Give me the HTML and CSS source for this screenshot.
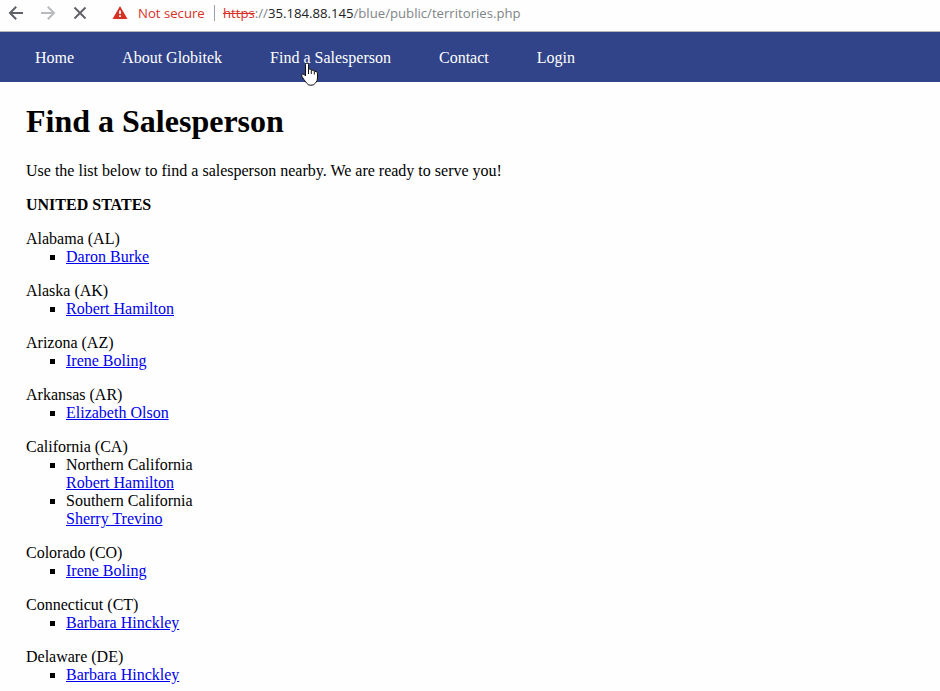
FILE: index.html
```html
<!DOCTYPE html>
<html lang="en">
<head>
<meta charset="utf-8">
<title>Find a Salesperson</title>
<link rel="stylesheet" href="styles.css">
</head>
<body>
<div class="toolbar">
  <svg class="tools" width="132" height="31" viewBox="0 0 132 31" fill="none">
    <path d="M23 13H10.500M16.200 6.800L10 13L16.200 19.200" stroke="#5f6068" stroke-width="2"/>
    <path d="M41 13H53.500M47.800 6.800L54 13L47.800 19.200" stroke="#b9babd" stroke-width="2"/>
    <path d="M74.500 7.500L85.500 18.500M85.500 7.500L74.500 18.500" stroke="#5f6068" stroke-width="1.900"/>
    <path d="M120 6L127.500 19H112.500Z" fill="#d93025"/>
    <path d="M120 10.500V14M120 15.200V17" stroke="#fff" stroke-width="1.800"/>
  </svg>
  <span class="warning">Not secure</span>
  <span class="divider"></span>
  <span class="url"><s>https</s>://<b>35.184.88.145</b>/blue/public/territories.php</span>
</div>
<nav class="nav"><a>Home</a><a>About Globitek</a><a>Find a Salesperson</a><a>Contact</a><a>Login</a></nav>
<svg class="cursor" width="18" height="24" viewBox="0 0 18 24">
  <path d="M4.500 14V2.500Q4.500 1 6 1T7.500 2.500V7Q9.700 6.300 10.300 8.300Q12.700 7.300 13.300 9.300Q16.500 8.800 16.500 11.500V16Q16.500 19 14.500 21Q13 23.300 10 23.300Q7 23.300 5.500 21Q3 18 1 14.500Q0 12.500 1.500 12T4.500 14Z" fill="#fff" stroke="#111"/>
  <path d="M7.500 7V12M10.300 8.500V12M13.300 9.500V12.500" stroke="#111"/>
</svg>
<main class="content">
  <h1>Find a Salesperson</h1>
  <p>Use the list below to find a salesperson nearby. We are ready to serve you!</p>
  <h2>UNITED STATES</h2>
  <section>Alabama (AL)<ul><li><a href="#">Daron Burke</a></li></ul></section>
  <section>Alaska (AK)<ul><li><a href="#">Robert Hamilton</a></li></ul></section>
  <section>Arizona (AZ)<ul><li><a href="#">Irene Boling</a></li></ul></section>
  <section>Arkansas (AR)<ul><li><a href="#">Elizabeth Olson</a></li></ul></section>
  <section>California (CA)<ul><li>Northern California<br><a href="#">Robert Hamilton</a></li><li>Southern California<br><a href="#">Sherry Trevino</a></li></ul></section>
  <section>Colorado (CO)<ul><li><a href="#">Irene Boling</a></li></ul></section>
  <section>Connecticut (CT)<ul><li><a href="#">Barbara Hinckley</a></li></ul></section>
  <section>Delaware (DE)<ul><li><a href="#">Barbara Hinckley</a></li></ul></section>
</main>
</body>
</html>
```
FILE: styles.css
```css
* { box-sizing: border-box; }
body { margin: 0; height: 691px; overflow: hidden; background: #fefefe; color: #000; font: 16px/18px "Liberation Serif", serif; }
.toolbar { height: 32px; display: flex; font: 13.17px/27px "Open Sans", sans-serif; border-bottom: 1px solid #b5b6b8; white-space: nowrap; }
.tools { flex: none; }
.warning { width: 74px; margin-left: 6px; color: #d93025; }
.divider { width: 1px; height: 16px; margin: 5px 8px 0 2px; background: #9aa0a6; }
.url { color: #808488; }
.url s { color: #d93025; }
.url b { color: #202124; font-weight: 400; }
.nav { height: 50px; background: #314489; color: #fff; display: flex; gap: 48px; padding: 17px 35px; white-space: nowrap; }
.cursor { position: absolute; left: 301px; top: 62px; }
.content { padding: 0 26px; }
h1 { margin: 21px 0 23px; font-size: 32px; line-height: 36px; }
p { margin: 0 0 16px; line-height: 18px; }
h2 { margin: 0 0 16px; font-size: 16px; line-height: 18px; }
section { margin-bottom: 16px; }
ul { list-style: square; margin: 0; padding-left: 40px; }
a[href] { color: #0000ee; text-decoration: underline; }
```
